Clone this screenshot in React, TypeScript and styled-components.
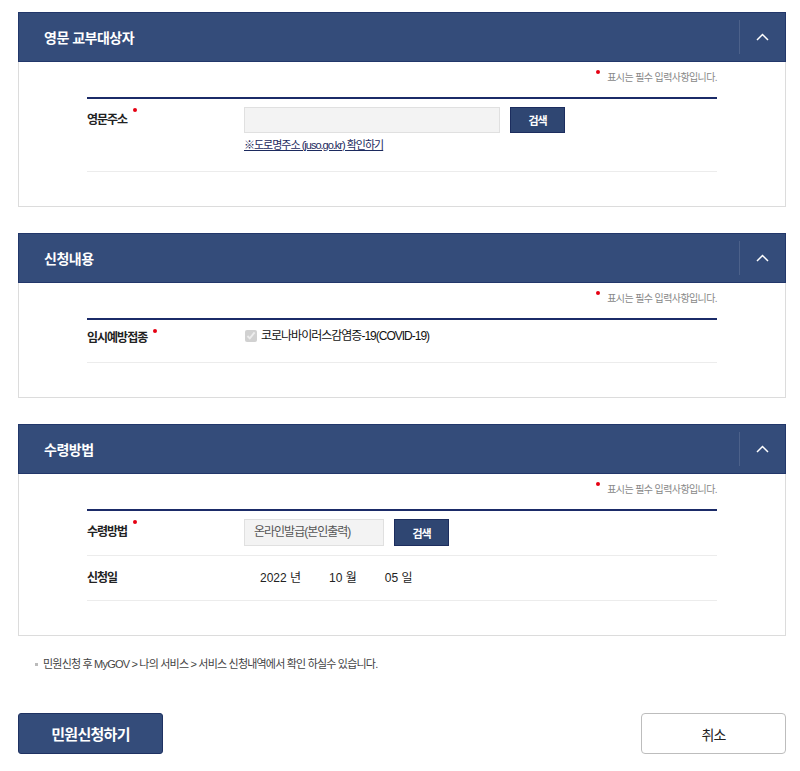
import React, { FC } from "react";
import styled, { createGlobalStyle } from "styled-components";

const GlobalStyle = createGlobalStyle`
  html, body {
    margin: 0;
    padding: 0;
    background: #fff;
  }
  body {
    font-family: "Liberation Sans", "Noto Sans CJK KR", sans-serif;
    color: #222;
    letter-spacing: -1px;
  }
`;

// 전체 페이지
const Page = styled.div`
  width: 768px;
  padding: 12px 14px 18px 18px;
`;

// 섹션 카드
const Card = styled.section`
  border: 1px solid #dcdcdc;
  margin-bottom: 26px;
  &:last-of-type {
    margin-bottom: 20px;
  }
`;

const Header = styled.div`
  display: flex;
  align-items: center;
  height: 48px;
  margin: -1px -1px 0;
  background: #344c7a;
  border: 1px solid #22376a;
`;

const Title = styled.h2`
  flex: 1;
  margin: 0;
  padding-left: 25px;
  font-size: 14px;
  font-weight: 700;
  letter-spacing: -0.5px;
  color: #fff;
`;

const Toggle = styled.button`
  display: flex;
  align-items: center;
  justify-content: center;
  width: 46px;
  height: 34px;
  padding: 0;
  background: none;
  border: none;
  border-left: 1px solid rgba(255, 255, 255, 0.12);
  cursor: pointer;
`;

const Body = styled.div`
  padding: 0 68px 34px 68px;
`;

// 필수 입력 안내
const Notice = styled.p`
  margin: 0;
  padding-top: 9px;
  margin-bottom: 12px;
  line-height: 14px;
  text-align: right;
  font-size: 10px;
  letter-spacing: -0.6px;
  color: #888;
`;

const Dot = styled.span`
  display: inline-block;
  width: 4px;
  height: 4px;
  border-radius: 50%;
  background: #e60012;
  vertical-align: top;
  margin: 0 7px 0 0;
  position: relative;
  top: -1px;
`;

const Table = styled.div`
  border-top: 2px solid #1b2b68;
`;

const Row = styled.div<{ $pad?: string }>`
  display: flex;
  align-items: flex-start;
  padding: ${(p) => p.$pad || "8px 0 9px"};
  border-bottom: 1px solid #ececec;
`;

const Label = styled.div<{ $lh?: number }>`
  width: 157px;
  flex-shrink: 0;
  font-size: 12px;
  font-weight: 600;
  line-height: ${(p) => p.$lh || 26}px;
  color: #222;

  ${Dot} {
    margin: 0 0 0 6px;
    top: 1px;
  }
`;

const Field = styled.div`
  display: flex;
  flex-direction: column;
`;

const InputLine = styled.div`
  display: flex;
  align-items: center;
  gap: 10px;
`;

const TextInput = styled.div<{ $w: number; $h?: number }>`
  box-sizing: border-box;
  width: ${(p) => p.$w}px;
  height: ${(p) => p.$h || 26}px;
  padding-left: 9px;
  background: #f3f3f3;
  border: 1px solid #e0e0e0;
  font-size: 12px;
  line-height: ${(p) => (p.$h || 26) - 2}px;
  color: #555;
`;

const SearchButton = styled.button<{ $h?: number }>`
  width: 55px;
  height: ${(p) => p.$h || 26}px;
  padding: 0;
  background: #2f4672;
  border: 1px solid #1c2d5e;
  color: #fff;
  font-family: inherit;
  font-size: 11px;
  font-weight: 700;
  letter-spacing: -1px;
  cursor: pointer;
`;

const Link = styled.a`
  margin-top: 5px;
  line-height: 14px;
  font-size: 11px;
  color: #1c2a5e;
  text-decoration: underline;
`;

const CheckLabel = styled.label`
  display: flex;
  align-items: center;
  font-size: 12px;
  line-height: 16px;
  color: #111;

  input {
    width: 12px;
    height: 12px;
    margin: 0 4px 0 1px;
  }
`;

const DateLine = styled.div`
  display: flex;
  gap: 28px;
  padding-left: 16px;
  font-size: 12px;
  letter-spacing: 0;
  line-height: 44px;
  color: #222;
`;

const DateRow = styled(Row)`
  padding: 0;
  align-items: center;
  ${Label} {
    line-height: 44px;
  }
`;

// 하단 안내
const Guide = styled.p`
  display: flex;
  align-items: center;
  margin: 0;
  padding-left: 17px;
  font-size: 11px;
  letter-spacing: -0.8px;
  line-height: 16px;
  color: #444;

  &:before {
    content: "";
    width: 3px;
    height: 3px;
    margin-right: 5px;
    background: #bbb;
  }
`;

const Actions = styled.div`
  display: flex;
  justify-content: space-between;
  margin-top: 41px;
`;

const PrimaryButton = styled.button`
  width: 145px;
  height: 41px;
  background: #344c7a;
  border: 1px solid #1f3262;
  border-radius: 3px;
  color: #fff;
  font-family: inherit;
  font-size: 15px;
  font-weight: 700;
  letter-spacing: -0.7px;
  cursor: pointer;
`;

const CancelButton = styled.button`
  width: 145px;
  height: 41px;
  background: #fff;
  border: 1px solid #bdbdbd;
  border-radius: 4px;
  color: #222;
  font-family: inherit;
  font-size: 14px;
  letter-spacing: -1px;
  cursor: pointer;
`;

const Chevron = () => (
  <svg width="13" height="8" viewBox="0 0 13 8">
    <polyline
      points="1,7 6.5,1.5 12,7"
      fill="none"
      stroke="#fff"
      strokeWidth="1.5"
    />
  </svg>
);

const Section: FC<{ title: string; children: React.ReactNode }> = ({
  title,
  children,
}) => (
  <Card>
    <Header>
      <Title>{title}</Title>
      <Toggle aria-label="접기">
        <Chevron />
      </Toggle>
    </Header>
    <Body>
      <Notice>
        <Dot />
        표시는 필수 입력사항입니다.
      </Notice>
      <Table>{children}</Table>
    </Body>
  </Card>
);

const App: FC = () => {
  return (
    <Page>
      <GlobalStyle />
      <Section title="영문 교부대상자">
        <Row $pad="8px 0 19px">
          <Label>
            영문주소
            <Dot />
          </Label>
          <Field>
            <InputLine>
              <TextInput $w={256} />
              <SearchButton>검색</SearchButton>
            </InputLine>
            <Link href="#">※도로명주소 (juso.go.kr) 확인하기</Link>
          </Field>
        </Row>
      </Section>

      <Section title="신청내용">
        <Row $pad="8px 0 14px">
          <Label $lh={20}>
            임시예방접종
            <Dot />
          </Label>
          <CheckLabel>
            <input type="checkbox" checked disabled readOnly />
            코로나바이러스감염증-19(COVID-19)
          </CheckLabel>
        </Row>
      </Section>

      <Section title="수령방법">
        <Row>
          <Label $lh={27}>
            수령방법
            <Dot />
          </Label>
          <InputLine>
            <TextInput $w={140} $h={27}>
              온라인발급(본인출력)
            </TextInput>
            <SearchButton $h={27}>검색</SearchButton>
          </InputLine>
        </Row>
        <DateRow>
          <Label>신청일</Label>
          <DateLine>
            <span>2022 년</span>
            <span>10 월</span>
            <span>05 일</span>
          </DateLine>
        </DateRow>
      </Section>

      <Guide>
        민원신청 후 MyGOV &gt; 나의 서비스 &gt; 서비스 신청내역에서 확인
        하실수 있습니다.
      </Guide>

      <Actions>
        <PrimaryButton>민원신청하기</PrimaryButton>
        <CancelButton>취소</CancelButton>
      </Actions>
    </Page>
  );
};

export default App;
